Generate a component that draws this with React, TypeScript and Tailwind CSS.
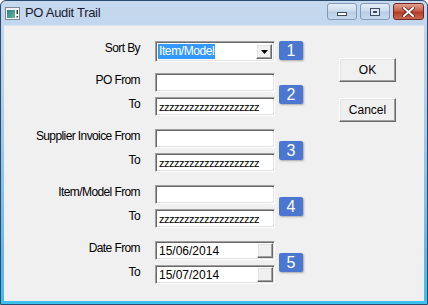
import { ReactNode } from "react";

const sunken =
  "bg-white border border-t-[#a0a0a0] border-l-[#a0a0a0] border-b-white border-r-white shadow-[inset_1px_1px_0_#696969,inset_-1px_-1px_0_#e3e3e3]";
const raised =
  "bg-[#f0f0f0] border border-t-white border-l-white border-b-[#696969] border-r-[#696969] shadow-[inset_-1px_-1px_0_#a0a0a0,inset_1px_1px_0_#e3e3e3]";

function Label({ children }: { children: ReactNode }) {
  return (
    <div className="w-[136px] h-[19px] text-right text-[12px] leading-[15px] tracking-[-0.6px] text-black">
      {children}
    </div>
  );
}

function TextBox({ value }: { value?: string }) {
  return (
    <div
      className={`ml-[15px] w-[120px] h-[19px] pl-[3px] text-[11px] leading-[18px] tracking-[-0.5px] text-black overflow-hidden ${sunken}`}
    >
      {value}
    </div>
  );
}

function DateBox({ value }: { value: string }) {
  return (
    <div
      className={`ml-[15px] w-[120px] h-[19px] flex items-stretch p-[1px] pl-[3px] text-[12px] leading-[16px] text-black ${sunken}`}
    >
      <span className="flex-1">{value}</span>
      <div className={`w-[16px] ${raised}`} />
    </div>
  );
}

function Badge({ n }: { n: number }) {
  return (
    <div className="ml-[4px] w-[24px] h-[19px] rounded-[2px] bg-[#4b77d1] shadow-[1px_1px_2px_rgba(0,0,0,0.3)] flex items-center justify-center text-white text-[16px] leading-none">
      {n}
    </div>
  );
}

function Row({ label, children }: { label: string; children: ReactNode }) {
  return (
    <div className="flex items-start">
      <Label>{label}</Label>
      {children}
    </div>
  );
}

function Group({ from, n, date }: { from: string; n: number; date?: [string, string] }) {
  return (
    <div className="flex items-center">
      <div className="flex flex-col gap-[5px]">
        <Row label={from}>{date ? <DateBox value={date[0]} /> : <TextBox />}</Row>
        <Row label="To">
          {date ? <DateBox value={date[1]} /> : <TextBox value="zzzzzzzzzzzzzzzzzzzz" />}
        </Row>
      </div>
      <Badge n={n} />
    </div>
  );
}

function AppIcon() {
  return (
    <svg width="15" height="13" viewBox="0 0 15 13">
      <rect x="0.5" y="0.5" width="14" height="12" fill="#f4f6f8" stroke="#7b8794" />
      <defs>
        <linearGradient id="tg" x1="0" y1="0" x2="1" y2="1">
          <stop offset="0" stopColor="#2f7f86" />
          <stop offset="1" stopColor="#67b79a" />
        </linearGradient>
      </defs>
      <rect x="2" y="3" width="8" height="8" fill="url(#tg)" />
      <rect x="11.5" y="3" width="1.5" height="4" fill="#3b3b3b" />
      <rect x="11.5" y="9" width="1.5" height="1.5" fill="#3b3b3b" />
    </svg>
  );
}

function TitleButton({ kind }: { kind: "min" | "max" | "close" }) {
  if (kind === "close") {
    return (
      <div className="w-[31px] h-[17px] rounded-[3px] border border-[#6d2a22] bg-[linear-gradient(#e3a08f,#c9604b_45%,#b63c27_55%,#c96a52)] flex items-center justify-center">
        <svg width="13" height="10" viewBox="0 0 13 10">
          <path d="M2 1 L11 9 M11 1 L2 9" stroke="#4a1c14" strokeWidth="3.4" strokeLinecap="square" />
          <path d="M2 1 L11 9 M11 1 L2 9" stroke="#ffffff" strokeWidth="2" strokeLinecap="square" />
        </svg>
      </div>
    );
  }
  return (
    <div className="w-[30px] h-[17px] rounded-[3px] border border-[#8299b8] bg-[linear-gradient(#e4edf7,#ccdcef_45%,#b9cde6_55%,#c9daee)] flex items-center justify-center">
      {kind === "min" ? (
        <div className="mt-[5px] w-[10px] h-[4px] border border-[#3a4b63] bg-white" />
      ) : (
        <div className="w-[10px] h-[8px] border border-[#3a4b63] bg-[#dfe8f3] flex items-center justify-center">
          <div className="w-[4px] h-[2px] border border-[#3a4b63]" />
        </div>
      )}
    </div>
  );
}

export default function App() {
  return (
    <div className="w-[428px] h-[305px] rounded-t-[6px] border border-[#2b4c72] bg-[linear-gradient(#c6d9ef,#b7cee8_30%,#63b7e6_85%,#3cc0ef)] flex flex-col overflow-hidden font-['Liberation_Sans',Arial,sans-serif]">
      <div className="h-[24px] shrink-0 flex items-center pl-[4px] pr-[3px]">
        <AppIcon />
        <span className="ml-[5px] text-[13px] tracking-[-0.3px] text-[#1a1a2e]">PO Audit Trail</span>
        <div className="ml-auto mb-[3px] flex gap-[3px]">
          <TitleButton kind="min" />
          <TitleButton kind="max" />
          <TitleButton kind="close" />
        </div>
      </div>
      <div className="flex-1 mx-[3px] mb-[3px] bg-[#f0f0f0] border-t border-[#d8e3ef] flex">
        <div className="pt-[15px] flex flex-col">
          <div className="flex items-start">
            <Label>Sort By</Label>
            <div className={`ml-[15px] w-[120px] h-[21px] flex items-stretch p-[2px] ${sunken}`}>
              <div className="flex-1 flex items-center">
                <span className="bg-[#3399ff] text-white text-[12px] leading-[15px] tracking-[-0.4px] px-[1px]">
                  Item/Model
                </span>
              </div>
              <div className={`w-[16px] flex items-center justify-center ${raised}`}>
                <svg width="7" height="4" viewBox="0 0 7 4">
                  <path d="M0 0 H7 L3.5 4 Z" fill="#000" />
                </svg>
              </div>
            </div>
            <Badge n={1} />
          </div>
          <div className="mt-[11px] flex flex-col gap-[13px]">
            <Group from="PO From" n={2} />
            <Group from="Supplier Invoice From" n={3} />
            <Group from="Item/Model From" n={4} />
            <Group from="Date From" n={5} date={["15/06/2014", "15/07/2014"]} />
          </div>
        </div>
        <div className="ml-[36px] pt-[32px] flex flex-col gap-[16px]">
          <button className={`w-[57px] h-[24px] text-[12px] text-black ${raised}`}>OK</button>
          <button className={`w-[57px] h-[24px] text-[12px] text-black ${raised}`}>Cancel</button>
        </div>
      </div>
    </div>
  );
}
